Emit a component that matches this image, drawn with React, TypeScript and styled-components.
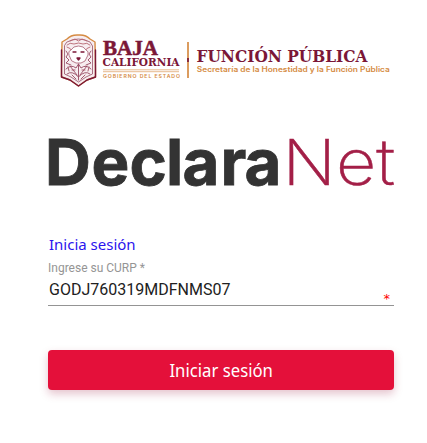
import React from 'react';
import styled, { createGlobalStyle } from 'styled-components';

const GlobalStyle = createGlobalStyle`
  * { box-sizing: border-box; }
  body { margin: 0; background: #fff; overflow: hidden; }
`;

const Page = styled.main`
  width: 427px;
  height: 443px;
  padding: 32px 32px 0 48px;
  background: #fff;
  font-family: Roboto, sans-serif;
`;
const Brand = styled.svg`
  display: block;
  width: 346px;
  height: 58px;
`;
const Wordmark = styled.svg`
  display: block;
  width: 347px;
  height: 84px;
  margin-top: 28px;
  overflow: visible;
`;
const Form = styled.form`
  display: flex;
  flex-direction: column;
  width: 346px;
  margin-top: 31px;
`;
const Title = styled.div`
  height: 27px;
  padding-left: 1px;
  font: 400 15.3px/22px 'Noto Sans', sans-serif;
  color: #2b14ee;
  white-space: nowrap;
`;
const TitleText = styled.span`
  display: inline-block;
  transform: scaleX(0.98);
  transform-origin: left;
`;
const Label = styled.label`
  height: 16px;
  font-size: 12px;
  line-height: 16px;
  color: #959595;
`;
const Field = styled.div`
  display: flex;
  justify-content: space-between;
  height: 30px;
  border-bottom: 1px solid #949494;
`;
const Input = styled.input`
  flex: 1;
  min-width: 0;
  height: 27px;
  padding: 0 0 0 1px;
  border: 0;
  outline: 0;
  background: transparent;
  font: 400 16px/27px Roboto, sans-serif;
  color: #212121;
`;
const Required = styled.span`
  padding: 13px 4px 0 0;
  font: 400 13px/20px 'DejaVu Sans', sans-serif;
  color: #f00;
`;
const Submit = styled.button`
  height: 40px;
  margin-top: 44px;
  padding: 0;
  border: 0;
  border-radius: 4px;
  background: #e4103a;
  box-shadow: 0 4px 9px rgba(150, 20, 60, 0.25);
  color: #fff;
  font: 400 17.5px/40px 'Noto Sans', sans-serif;
`;
const SubmitText = styled.span`
  display: inline-block;
  transform: scaleX(0.955);
`;

const wine = '#7b1737';
const gold = '#d58b43';

function Crest() {
  return (
    <g fill="none" strokeLinecap="round" strokeLinejoin="round">
      <path d="M67 39 Q71 34.5 78.5 35 Q86 34.5 90 39 L95 42 L95.5 70 V77 L87 80 L78.5 86 L70 80 L61.5 77 V70 L62 42Z" fill="#f7edf0" stroke={gold} strokeWidth="1.4" />
      <path d="M61.5 50 V77 L70 80 L78.5 86 L87 80 L95.5 77 V50" stroke={wine} strokeWidth="1.4" />
      <path d="M67 42 Q78.5 36 90 42 L92.5 46 V74 L86 77 L78.5 82 L71 77 L64.5 74 V46Z" stroke="#955066" strokeWidth=".8" />
      <path d="M70 41 L75 39 L78.5 41 L82 39 L87 41 M67 45 Q70 42 74 44 L78.5 43 L83 44 Q87 42 90 45 M67 47 Q71 48 72 51 M90 47 Q86 48 85 51" stroke="#b76770" strokeWidth=".9" />
      <path d="M69 55 Q68 51 71 50 Q73 46 78.5 46 Q84 46 86 50 Q89 51 88 55 L85 61 L81 63 H76 L72 61Z" fill="#fff" stroke="#a65b6e" strokeWidth=".8" />
      <path d="M73 52 H76 M81 52 H84 M77 58 H80 L78.5 60Z" stroke={wine} strokeWidth="1.3" />
      <path d="M66 51 L68 54 L66 57 L69 60 L66 63 L71 65 M91 51 L89 54 L91 57 L88 60 L91 63 L86 65 M66 69 Q71 64 76 68 L78.5 64 L81 68 Q86 64 91 69 M67 74 Q72 70 78.5 77 Q85 70 90 74 M78.5 64 V80 M70 66 L77 75 M87 66 L80 75" stroke="#974961" strokeWidth=".9" />
      <path d="M68 67 L69 71 M89 67 L88 71 M72 75 L76 79 M85 75 L81 79 M72 70 H75 M82 70 H85" stroke="#a65b6e" strokeWidth="1" />
    </g>
  );
}

function GovernmentLogo() {
  return (
    <Brand viewBox="48 32 346 58" aria-label="Baja California, Función Pública">
      <Crest />
      <g fill={wine} fontFamily="'DejaVu Serif', serif" fontWeight="700">
        <text x="103" y="55" fontFamily="'Liberation Serif', serif" fontSize="20" stroke={wine} strokeWidth=".5" textLength="55" lengthAdjust="spacingAndGlyphs">BAJA</text>
        <text x="102.5" y="66" fontSize="11" textLength="77" lengthAdjust="spacingAndGlyphs">CALIFORNIA</text>
        <text x="196.5" y="62.3" fontSize="16" textLength="171" lengthAdjust="spacingAndGlyphs">FUNCIÓN PÚBLICA</text>
      </g>
      <path d="M103 69.8H179M103 71.7H179" stroke={gold} strokeWidth=".6" />
      <g fill={gold} fontFamily="Inter, sans-serif">
        <text x="103" y="78.3" fontSize="5.2" fontWeight="600" textLength="77">GOBIERNO DEL ESTADO</text>
        <text x="196.8" y="72" fontSize="7.3" fontWeight="600" textLength="193" lengthAdjust="spacingAndGlyphs">Secretaría de la Honestidad y la Función Pública</text>
      </g>
      <path d="M188 42V78" stroke={gold} strokeWidth="1.7" />
      <path d="M188 58V62" stroke={wine} strokeWidth="1.7" />
    </Brand>
  );
}

export default function App() {
  return (
    <Page>
      <GlobalStyle />
      <GovernmentLogo />
      <Wordmark viewBox="48 118 347 84" aria-label="DeclaraNet">
        <g fontFamily="Inter, sans-serif" fontSize="63.5">
          <text x="45 91.5 129.5 166 182.5 220.5 244.5" y="185" fill="#333" fontWeight="700" stroke="#333" strokeWidth=".8">Declara</text>
          <text x="282.5" y="185" fill="#a31f47" stroke="#a31f47" strokeWidth=".5" fontWeight="200" textLength="112.5" lengthAdjust="spacingAndGlyphs">Net</text>
        </g>
      </Wordmark>
      <Form onSubmit={(e) => e.preventDefault()}>
        <Title><TitleText>Inicia sesión</TitleText></Title>
        <Label htmlFor="curp">Ingrese su CURP *</Label>
        <Field>
          <Input id="curp" defaultValue="GODJ760319MDFNMS07" />
          <Required>*</Required>
        </Field>
        <Submit type="submit"><SubmitText>Iniciar sesión</SubmitText></Submit>
      </Form>
    </Page>
  );
}
